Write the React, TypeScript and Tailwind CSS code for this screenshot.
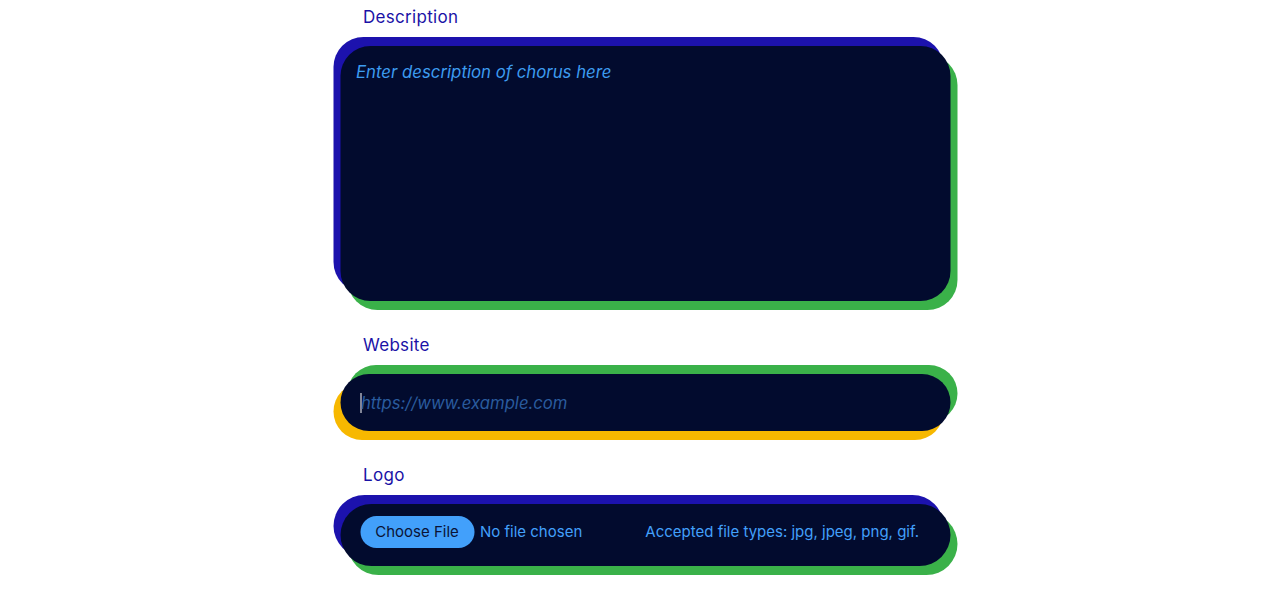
import React from "react";

const font = { fontFamily: "Inter, 'Noto Sans', sans-serif" };

function Label({ children }: { children: React.ReactNode }) {
  return (
    <div className="pl-[23px] text-[17px] leading-[24px] tracking-[0.3px] text-[#1a12a6]">
      {children}
    </div>
  );
}

export default function App() {
  return (
    <main className="min-h-[608px] bg-white" style={font}>
      <div className="mx-auto flex w-[610px] translate-x-[1.5px] flex-col pt-[5px]">
        <Label>Description</Label>
        <div className="mt-[17px] h-[255px] rounded-[30px] bg-[#020b2e] px-[16px] pt-[14px] shadow-[-7px_-9px_0_#1c12ad,7px_9px_0_#3ab149]">
          <span className="text-[16.8px] italic leading-[24px] text-[#3d9cf0]">
            Enter description of chorus here
          </span>
        </div>

        <div className="mt-[32px]">
          <Label>Website</Label>
        </div>
        <div className="mt-[17px] flex h-[57px] items-center rounded-full bg-[#020b2e] pl-[20px] shadow-[7px_-9px_0_#3ab149,-7px_9px_0_#f7b800]">
          <span className="h-[20px] w-px bg-white" />
          <span className="text-[16.7px] italic leading-[24px] text-[#2a5c9e]">
            https://www.example.com
          </span>
        </div>

        <div className="mt-[32px]">
          <Label>Logo</Label>
        </div>
        <div className="mt-[17px] flex h-[62px] items-center rounded-[31px] bg-[#020b2e] pb-[6px] pl-[20px] pr-[31px] shadow-[-7px_-9px_0_#1c12ad,7px_9px_0_#3ab149]">
          <span className="flex h-[32px] w-[114px] items-center justify-center rounded-full bg-[#42a0fb] text-[15px] text-[#0a1336]">
            Choose File
          </span>
          <span className="ml-[6px] text-[15px] text-[#42a0fb]">No file chosen</span>
          <span className="ml-auto text-[15px] text-[#42a0fb]">
            Accepted file types: jpg, jpeg, png, gif.
          </span>
        </div>
      </div>
    </main>
  );
}
